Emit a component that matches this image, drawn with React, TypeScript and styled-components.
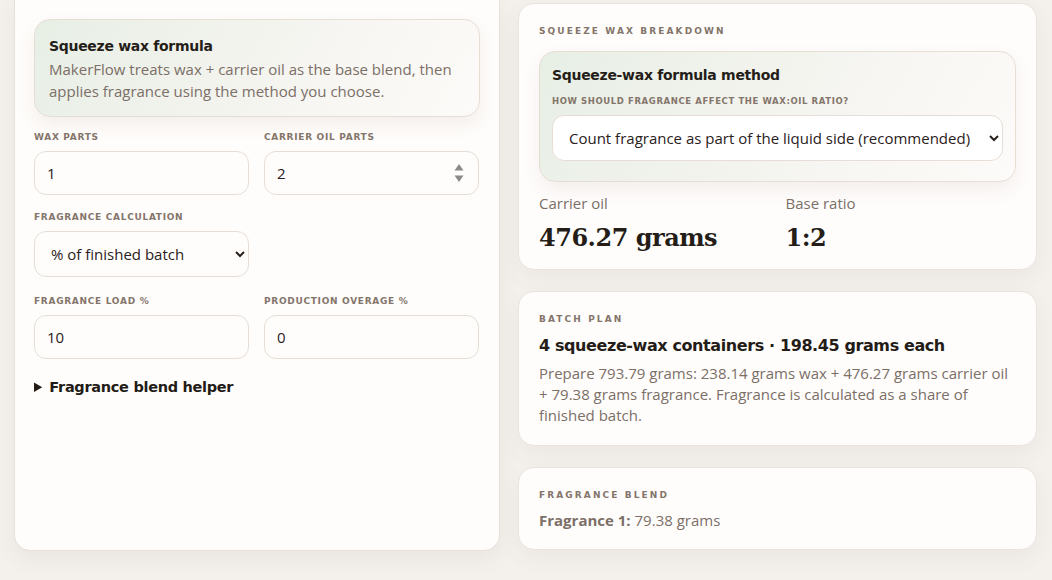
import React from "react";
import styled, { createGlobalStyle } from "styled-components";

const Global = createGlobalStyle`
  html, body { margin: 0; padding: 0; background: #f4f1ed; overflow: hidden; }
  body { font-family: "Open Sans", "Noto Sans", sans-serif; color: #2a211c; }
  * { box-sizing: border-box; }
`;

const Page = styled.div`
  display: grid;
  grid-template-columns: 486px 519px;
  column-gap: 18px;
  padding: 0 15px 0 14px;
  height: 580px;
  align-items: start;
`;

const LeftPanel = styled.section`
  background: #fffdfb;
  border: 1px solid #e8dfd9;
  border-top: none;
  border-radius: 0 0 16px 16px;
  box-shadow: 0 8px 22px rgba(90, 70, 55, 0.07);
  padding: 19px 19px 0 19px;
  height: 551px;
  display: flex;
  flex-direction: column;
`;

const Note = styled.div`
  border: 1px solid #e6ddd5;
  border-radius: 16px;
  background: linear-gradient(120deg, #e7efe5 0%, #f3f3ee 45%, #fdfbf9 100%);
  box-shadow: 0 8px 18px rgba(90, 70, 55, 0.08);
  padding: 15px 14px 14px 14px;
`;

const NoteTitle = styled.div`
  font-family: "DejaVu Sans", sans-serif;
  font-weight: 700;
  font-size: 14px;
  letter-spacing: -0.3px;
  line-height: 22px;
  color: #251d18;
`;

const NoteText = styled.p`
  margin: 1px 0 0 0;
  font-size: 15px;
  line-height: 22px;
  color: #7b6f67;
`;

const Label = styled.div<{ $wide?: boolean }>`
  font-family: "DejaVu Sans", sans-serif;
  font-weight: 700;
  font-size: 9px;
  line-height: 12px;
  text-transform: uppercase;
  letter-spacing: ${(p) => (p.$wide ? "2.1px" : "0.7px")};
  color: #84756b;
`;

const FieldGrid = styled.div`
  display: grid;
  grid-template-columns: 215px 215px;
  column-gap: 15px;
  row-gap: 16px;
  margin-top: 14px;
`;

const Field = styled.label`
  display: flex;
  flex-direction: column;
  gap: 8px;
`;

const InputWrap = styled.div`
  position: relative;
`;

const TextInput = styled.input`
  width: 100%;
  height: 44px;
  border: 1px solid #e6ddd6;
  border-radius: 12px;
  background: #fffdfb;
  padding: 0 12px;
  font-family: "Open Sans", sans-serif;
  font-size: 15px;
  color: #2a211c;
  outline: none;
  -moz-appearance: textfield;
  &::-webkit-inner-spin-button,
  &::-webkit-outer-spin-button { -webkit-appearance: none; margin: 0; }
`;

const Spinner = styled.svg`
  position: absolute;
  right: 14px;
  top: 11px;
  pointer-events: none;
`;

const Select = styled.select<{ $white?: boolean }>`
  width: 100%;
  height: 46px;
  border: 1px solid #e6ddd6;
  border-radius: 12px;
  background: ${(p) => (p.$white ? "#ffffff" : "#fffdfb")};
  margin-bottom: ${(p) => (p.$white ? "0" : "2px")};
  padding: 0 12px;
  font-family: "Open Sans", sans-serif;
  font-size: 15px;
  color: #2a211c;
  outline: none;
`;

const Helper = styled.details`
  margin-top: 18px;
  summary {
    font-family: "DejaVu Sans", sans-serif;
    font-weight: 700;
    font-size: 14.5px;
    letter-spacing: -0.3px;
    color: #231b16;
    cursor: pointer;
    line-height: 20px;
  }
`;

const RightCol = styled.div`
  display: flex;
  flex-direction: column;
  gap: 21px;
  padding-top: 3px;
`;

const Card = styled.section<{ $h: number }>`
  background: #fffdfc;
  border: 1px solid #ebe3de;
  border-radius: 16px;
  box-shadow: 0 8px 22px rgba(90, 70, 55, 0.06);
  padding: 20px 20px 0 20px;
  height: ${(p) => p.$h}px;
`;

const CardLabel = styled(Label)`
  margin-top: 1px;
`;

const InnerNote = styled(Note)`
  margin-top: 14px;
  padding: 12px 12px 20px 12px;
  display: flex;
  flex-direction: column;
`;

const SmallLabel = styled(Label)`
  font-size: 8.5px;
  letter-spacing: 0.6px;
  margin-top: 9px;
  margin-bottom: 8px;
`;

const Stats = styled.div`
  display: grid;
  grid-template-columns: 1fr 1fr;
  column-gap: 16px;
  margin-top: 10px;
`;

const StatName = styled.div`
  font-size: 15px;
  line-height: 22px;
  color: #7b6f67;
`;

const StatValue = styled.div`
  font-family: "DejaVu Serif", serif;
  font-weight: 700;
  font-size: 24px;
  letter-spacing: -0.5px;
  line-height: 34px;
  margin-top: 7px;
  color: #251d18;
`;

const PlanTitle = styled.div`
  font-family: "DejaVu Sans", sans-serif;
  font-weight: 700;
  font-size: 16px;
  letter-spacing: -0.4px;
  line-height: 24px;
  margin-top: 9px;
  color: #241c17;
`;

const PlanText = styled.p`
  margin: 5px 0 0 0;
  font-size: 15px;
  line-height: 21px;
  color: #7b6f67;
`;

const BlendLine = styled.div`
  margin-top: 8px;
  font-size: 15px;
  line-height: 22px;
  color: #7b6f67;
  b { font-weight: 700; }
`;

export default function App() {
  return (
    <>
      <Global />
      <Page>
        <LeftPanel>
          <Note>
            <NoteTitle>Squeeze wax formula</NoteTitle>
            <NoteText>
              MakerFlow treats wax + carrier oil as the base blend, then applies fragrance using the method you choose.
            </NoteText>
          </Note>
          <FieldGrid>
            <Field>
              <Label>Wax parts</Label>
              <TextInput type="number" defaultValue={1} />
            </Field>
            <Field>
              <Label>Carrier oil parts</Label>
              <InputWrap>
                <TextInput type="number" defaultValue={2} />
                <Spinner width="12" height="22" viewBox="0 0 12 22">
                  <path d="M6 2 L10.5 8.5 L1.5 8.5 Z" fill="#8a8a8a" />
                  <path d="M6 20 L10.5 13.5 L1.5 13.5 Z" fill="#8a8a8a" />
                </Spinner>
              </InputWrap>
            </Field>
            <Field>
              <Label>Fragrance calculation</Label>
              <Select defaultValue="finished">
                <option value="finished">% of finished batch</option>
                <option value="base">% of base blend</option>
              </Select>
            </Field>
            <div />
            <Field>
              <Label>Fragrance load %</Label>
              <TextInput type="number" defaultValue={10} />
            </Field>
            <Field>
              <Label>Production overage %</Label>
              <TextInput type="number" defaultValue={0} />
            </Field>
          </FieldGrid>
          <Helper>
            <summary>Fragrance blend helper</summary>
          </Helper>
        </LeftPanel>
        <RightCol>
          <Card $h={267}>
            <CardLabel $wide>Squeeze wax breakdown</CardLabel>
            <InnerNote>
              <NoteTitle>Squeeze-wax formula method</NoteTitle>
              <SmallLabel>How should fragrance affect the wax:oil ratio?</SmallLabel>
              <Select $white defaultValue="liquid">
                <option value="liquid">Count fragrance as part of the liquid side (recommended)</option>
                <option value="separate">Add fragrance on top</option>
              </Select>
            </InnerNote>
            <Stats>
              <div>
                <StatName>Carrier oil</StatName>
                <StatValue>476.27 grams</StatValue>
              </div>
              <div>
                <StatName>Base ratio</StatName>
                <StatValue>1:2</StatValue>
              </div>
            </Stats>
          </Card>
          <Card $h={155}>
            <CardLabel $wide>Batch plan</CardLabel>
            <PlanTitle>4 squeeze-wax containers · 198.45 grams each</PlanTitle>
            <PlanText>
              Prepare 793.79 grams: 238.14 grams wax + 476.27 grams carrier oil + 79.38 grams fragrance. Fragrance is calculated as a share of finished batch.
            </PlanText>
          </Card>
          <Card $h={83}>
            <CardLabel $wide>Fragrance blend</CardLabel>
            <BlendLine>
              <b>Fragrance 1:</b> 79.38 grams
            </BlendLine>
          </Card>
        </RightCol>
      </Page>
    </>
  );
}
